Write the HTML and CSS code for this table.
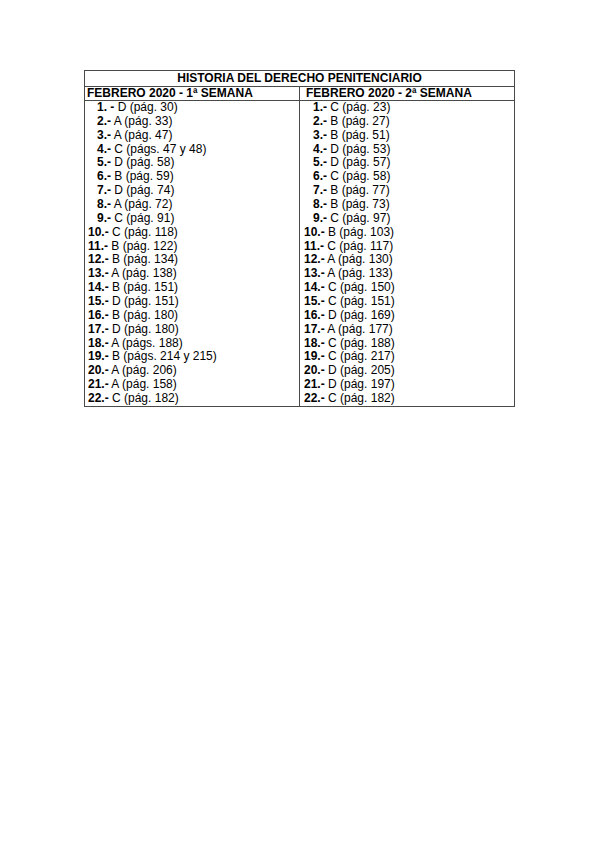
FILE: index.html
```html
<!DOCTYPE html>
<html lang="es">
<head>
<meta charset="utf-8">
<title>Historia del Derecho Penitenciario</title>
<link rel="stylesheet" href="styles.css">
</head>
<body>
<div class="page">
<table class="sheet">
<tr><th colspan="2" class="title">HISTORIA DEL DERECHO PENITENCIARIO</th></tr>
<tr><th class="hl">FEBRERO 2020 - 1ª SEMANA</th><th class="hr">FEBRERO 2020 - 2ª SEMANA</th></tr>
<tr><td class="l"><b class="s">1. -</b> D (pág. 30)</td><td class="r"><b class="s">1.-</b> C (pág. 23)</td></tr>
<tr><td class="l"><b class="s">2.-</b> A (pág. 33)</td><td class="r"><b class="s">2.-</b> B (pág. 27)</td></tr>
<tr><td class="l"><b class="s">3.-</b> A (pág. 47)</td><td class="r"><b class="s">3.-</b> B (pág. 51)</td></tr>
<tr><td class="l"><b class="s">4.-</b> C (págs. 47 y 48)</td><td class="r"><b class="s">4.-</b> D (pág. 53)</td></tr>
<tr><td class="l"><b class="s">5.-</b> D (pág. 58)</td><td class="r"><b class="s">5.-</b> D (pág. 57)</td></tr>
<tr><td class="l"><b class="s">6.-</b> B (pág. 59)</td><td class="r"><b class="s">6.-</b> C (pág. 58)</td></tr>
<tr><td class="l"><b class="s">7.-</b> D (pág. 74)</td><td class="r"><b class="s">7.-</b> B (pág. 77)</td></tr>
<tr><td class="l"><b class="s">8.-</b> A (pág. 72)</td><td class="r"><b class="s">8.-</b> B (pág. 73)</td></tr>
<tr><td class="l"><b class="s">9.-</b> C (pág. 91)</td><td class="r"><b class="s">9.-</b> C (pág. 97)</td></tr>
<tr><td class="l"><b>10.-</b> C (pág. 118)</td><td class="r"><b>10.-</b> B (pág. 103)</td></tr>
<tr><td class="l"><b>11.-</b> B (pág. 122)</td><td class="r"><b>11.-</b> C (pág. 117)</td></tr>
<tr><td class="l"><b>12.-</b> B (pág. 134)</td><td class="r"><b>12.-</b> A (pág. 130)</td></tr>
<tr><td class="l"><b>13.-</b> A (pág. 138)</td><td class="r"><b>13.-</b> A (pág. 133)</td></tr>
<tr><td class="l"><b>14.-</b> B (pág. 151)</td><td class="r"><b>14.-</b> C (pág. 150)</td></tr>
<tr><td class="l"><b>15.-</b> D (pág. 151)</td><td class="r"><b>15.-</b> C (pág. 151)</td></tr>
<tr><td class="l"><b>16.-</b> B (pág. 180)</td><td class="r"><b>16.-</b> D (pág. 169)</td></tr>
<tr><td class="l"><b>17.-</b> D (pág. 180)</td><td class="r"><b>17.-</b> A (pág. 177)</td></tr>
<tr><td class="l"><b>18.-</b> A (págs. 188)</td><td class="r"><b>18.-</b> C (pág. 188)</td></tr>
<tr><td class="l"><b>19.-</b> B (págs. 214 y 215)</td><td class="r"><b>19.-</b> C (pág. 217)</td></tr>
<tr><td class="l"><b>20.-</b> A (pág. 206)</td><td class="r"><b>20.-</b> D (pág. 205)</td></tr>
<tr><td class="l"><b>21.-</b> A (pág. 158)</td><td class="r"><b>21.-</b> D (pág. 197)</td></tr>
<tr><td class="l"><b>22.-</b> C (pág. 182)</td><td class="r"><b>22.-</b> C (pág. 182)</td></tr>
</table>
</div>
</body>
</html>
```
FILE: styles.css
```css
html, body {
  margin: 0;
  padding: 0;
  background: #ffffff;
}
.page {
  padding: 70px 0 0 84px;
  font-family: "Liberation Sans", Arial, sans-serif;
  font-size: 12px;
  color: #000;
}
.sheet {
  border-collapse: collapse;
  width: 431px;
  table-layout: fixed;
}
.sheet th, .sheet td {
  padding: 0;
  white-space: nowrap;
  text-align: left;
  vertical-align: middle;
}
.sheet th {
  font-weight: bold;
  border: 1px solid #4a4a4a;
}
.title {
  text-align: center !important;
  height: 15px;
  line-height: 15px;
}
.hl, .hr {
  height: 13px;
  line-height: 13px;
}
.hl { padding-left: 2px !important; }
.hr { padding-left: 6px !important; }
.sheet td {
  line-height: 13.86px;
  height: 13.86px;
  border-left: 1px solid #4a4a4a;
  border-right: 1px solid #4a4a4a;
}
.sheet tr:last-child td {
  border-bottom: 1px solid #4a4a4a;
}
.sheet td.l { padding-left: 3px; }
.sheet td.r { padding-left: 4px; }
.s { margin-left: 9px; }
b { font-weight: bold; }
```
